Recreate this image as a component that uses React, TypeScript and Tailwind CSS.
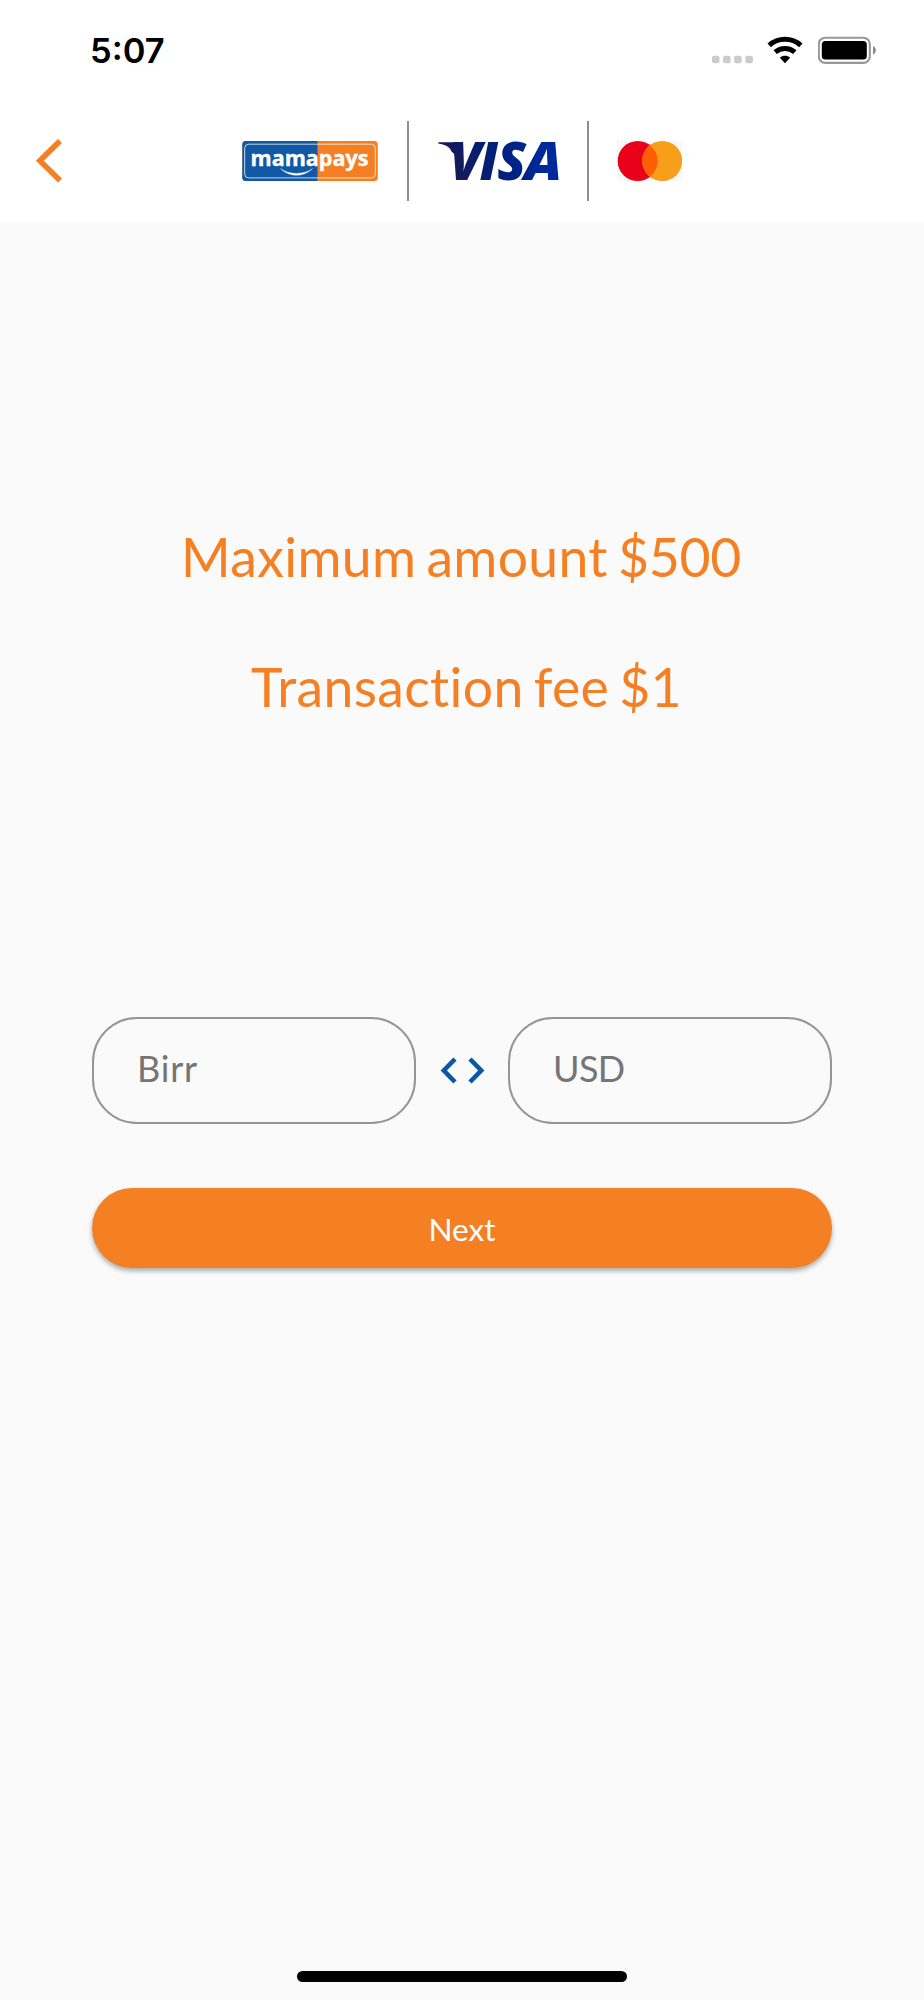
import { useState } from "react"

type AmountInputProps = {
    placeholder: string
    value: string
    tracking: string
    onChange: (value: string) => void
}

const signalDots = [0, 11.1, 22.2, 33.3];

function StatusBar() {
    return (
        <div className="flex h-[98px] items-start justify-between pt-[30px] pr-[48px] pl-[90px]">
            <p className="font-['Inter'] text-[34.5px] leading-[42px] font-semibold text-black">5:07</p>
            <div className="flex items-center pt-[6px]">
                <svg width="41" height="28" viewBox="0 0 41 28" fill="#cbcbcb">
                    {signalDots.map((x) => (
                        <rect key={x} x={x} y="19.8" width="7.5" height="7.5" rx="2" />
                    ))}
                </svg>
                <svg className="ml-[14px]" width="36" height="28" viewBox="0 0 36 28" fill="none" stroke="#000" strokeWidth="5">
                    <path d="M2.2 9.3C11 1.2 25 1.2 33.8 9.3" />
                    <path d="M8.2 16.2C13.8 11.2 22.2 11.2 27.8 16.2" />
                    <path d="M18 27.3L12.9 21.8C15.8 19.2 20.2 19.2 23.1 21.8Z" fill="#000" stroke="none" />
                </svg>
                <svg className="ml-[15px]" width="58" height="28" viewBox="0 0 58 28">
                    <rect x="0.8" y="1.7" width="51" height="25.2" rx="6.5" fill="none" stroke="#979797" strokeWidth="2.1" />
                    <rect x="3.8" y="5" width="45" height="18.6" rx="3.6" fill="#000" />
                    <path d="M55 10C56.8 10.8 57.8 12.4 57.8 14.3C57.8 16.2 56.8 17.8 55 18.6Z" fill="#888" />
                </svg>
            </div>
        </div>
    )
}

function MamapaysLogo() {
    return (
        <svg width="136" height="40" viewBox="0 0 136 40">
            <rect x="0.3" width="135.5" height="40" rx="3.5" fill="#f58023" />
            <path d="M3.8 0H75.5V40H3.8A3.5 3.5 0 0 1 0.3 36.5V3.5A3.5 3.5 0 0 1 3.8 0Z" fill="#1159a5" />
            <rect x="2.7" y="3.2" width="130.6" height="33.7" rx="4" fill="none" stroke="#fff" strokeOpacity="0.75" strokeWidth="1" />
            <text x="8.5" y="25" fontFamily="Open Sans" fontWeight="700" fontSize="21.5" fill="#fff" stroke="#fff" strokeWidth="0.4" textLength="118" lengthAdjust="spacingAndGlyphs">mamapays</text>
            <path d="M38.5 27.5C47 36.5 62 36.5 70.5 27.5C62 34 47 34 38.5 27.5Z" fill="#fff" stroke="#fff" strokeWidth="0.3" />
        </svg>
    )
}

function VisaLogo() {
    return (
        <svg className="overflow-visible" width="121" height="40" viewBox="0 0 121 40">
            <defs>
                <linearGradient id="visa" gradientUnits="userSpaceOnUse" x1="0" y1="40" x2="121" y2="0">
                    <stop offset="0.15" stopColor="#161a58" />
                    <stop offset="0.5" stopColor="#00207a" />
                    <stop offset="0.85" stopColor="#002a9c" />
                </linearGradient>
            </defs>
            <path d="M0.3 1.3H17C19.5 1.3 21 2.6 21.5 5L24 20L13.5 10.5C11.5 5.5 7 3.5 0.3 2.5Z" fill="url(#visa)" />
            <text y="38.8" fontFamily="Open Sans" fontStyle="italic" fontWeight="800" fontSize="52.5" fill="url(#visa)">
                <tspan x="11.5">V</tspan>
                <tspan x="41.5">I</tspan>
                <tspan x="59.3">S</tspan>
                <tspan x="86.3" textLength="38" lengthAdjust="spacingAndGlyphs">A</tspan>
            </text>
        </svg>
    )
}

function MastercardLogo() {
    return (
        <svg width="65" height="40" viewBox="0 0 65 40">
            <defs>
                <pattern id="checks" width="4" height="4" patternUnits="userSpaceOnUse">
                    <rect width="2" height="2" fill="#f1f1f1" />
                    <rect x="2" y="2" width="2" height="2" fill="#f1f1f1" />
                </pattern>
            </defs>
            <rect width="65" height="40" fill="url(#checks)" />
            <circle cx="20.7" cy="20" r="20" fill="#eb001b" />
            <circle cx="45.2" cy="20" r="20" fill="#f79e1b" />
            <path d="M32.95 4.2A20 20 0 0 1 32.95 35.8A20 20 0 0 1 32.95 4.2Z" fill="#ff5f00" />
        </svg>
    )
}

function Header() {
    return (
        <header className="h-[223px] bg-white">
            <StatusBar />
            <div className="flex items-center pt-[23px] pl-[36px]">
                <button aria-label="Back">
                    <svg width="26" height="44" viewBox="0 0 26 44" fill="none" stroke="#f58023" strokeWidth="5.6">
                        <path d="M24 1.9L3.9 21.7L24 41.5" />
                    </svg>
                </button>
                <div className="ml-[180px] flex h-20 items-center">
                    <MamapaysLogo />
                    <span className="ml-[29px] h-20 w-[2px] bg-[#8e8e8e]" />
                    <div className="ml-[29px]"><VisaLogo /></div>
                    <span className="ml-[28px] h-20 w-[2px] bg-[#8e8e8e]" />
                    <div className="ml-[28px]"><MastercardLogo /></div>
                </div>
            </div>
        </header>
    )
}

function AmountInput({ placeholder, value, tracking, onChange }: AmountInputProps) {
    return (
        <input
            type="text"
            value={value}
            placeholder={placeholder}
            onChange={(e) => onChange(e.target.value)}
            className={`${tracking} h-[107px] w-[324px] rounded-[45px] border-2 border-[#959595] pb-[5px] pl-[43px] text-[36px] text-gray-800 outline-none placeholder:text-[#757575]`}
        />
    )
}

export default function App() {
    const [birr, setBirr] = useState("");
    const [usd, setUsd] = useState("");

    return (
        <div className="flex h-[2000px] w-[924px] flex-col bg-[#fafafa] font-['Lato',sans-serif]">
            <Header />
            <main className="flex flex-1 flex-col items-center">
                <div className="mt-[301px] flex flex-col items-center gap-[65px] text-[53.5px] leading-[64px] text-[#f58023] [word-spacing:-4px]">
                    <p className="pr-[2px] tracking-[0.35px]">Maximum amount <span className="tracking-[-0.3px]">$500</span></p>
                    <p className="pt-px pl-[9px] -mb-px tracking-[0.35px]">Transaction fee $1</p>
                </div>

                <div className="mt-[300px] flex w-[740px] items-center justify-between">
                    <AmountInput placeholder="Birr" value={birr} tracking="tracking-[0.8px]" onChange={setBirr} />
                    <svg width="45" height="27" viewBox="0 0 45 27" fill="none" stroke="#0858a8" strokeWidth="4.6">
                        <path d="M15 2L3.8 13.5L15 25" />
                        <path d="M30 2L41.2 13.5L30 25" />
                    </svg>
                    <AmountInput placeholder="USD" value={usd} tracking="tracking-[-0.6px]" onChange={setUsd} />
                </div>

                <button className="mt-[64px] h-[80px] w-[740px] rounded-full bg-[#f58023] pt-[4px] text-[31.5px] text-white shadow-[0_3px_5px_rgba(0,0,0,0.32)]">
                    Next
                </button>

                <div className="mt-auto mb-[18px] h-[11px] w-[330px] rounded-full bg-black" />
            </main>
        </div>
    )
}
